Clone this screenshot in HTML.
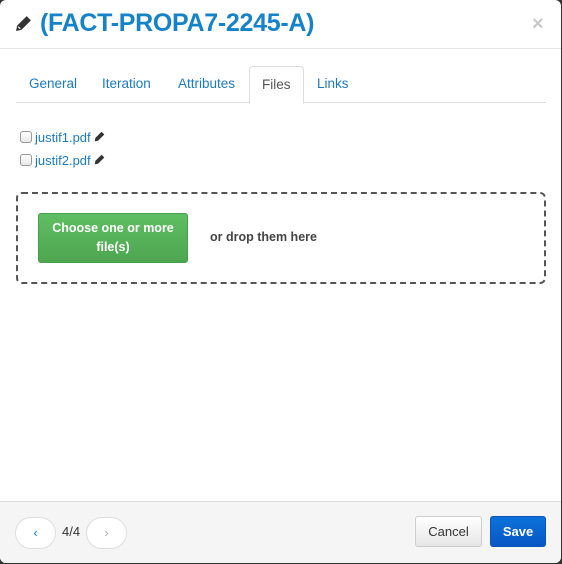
<!DOCTYPE html>
<html><head><style>
*{box-sizing:border-box;margin:0;padding:0}
html,body{width:562px;height:564px;background:#333;overflow:hidden;font-family:"Liberation Sans",Arial,sans-serif}
.m{position:absolute;left:0;top:0;width:561px;height:563px;background:#fff;border-radius:6px;overflow:hidden}
.hd{position:absolute;left:0;top:0;width:100%;height:49px;border-bottom:1px solid #e5e5e5}
.hd .t{position:absolute;left:40px;top:9px;font-size:25px;font-weight:bold;color:#1583c9;letter-spacing:-0.3px}
.hd .x{position:absolute;left:532px;top:13px;font-size:20px;font-weight:bold;color:#c8c8c8}
.tabs{position:absolute;left:16px;top:66px;width:530px;height:37px;border-bottom:1px solid #ddd}
.tab{position:absolute;top:0;height:37px;line-height:36px;font-size:13.5px;color:#1a7bc4}
.tab.a{background:#fff;border:1px solid #ddd;border-bottom-color:#fff;border-radius:4px 4px 0 0;color:#555;height:38px;padding:0 12px;line-height:35px}
.f{position:absolute;left:20px;font-size:13px;color:#1a7bc4}
.cb{display:inline-block;width:12px;height:12px;border:1px solid #999;border-radius:3px;vertical-align:-1px;margin-right:3px;background:linear-gradient(#fff,#e8e8e8)}
.dz{position:absolute;left:16px;top:192px;width:530px;height:92px;border:2px dashed #555;border-radius:6px}
.btn{position:absolute;left:20px;top:19px;width:150px;height:50px;background:linear-gradient(#5fbe62,#4ea650);border:1px solid #46a049;border-radius:3px;color:#fff;font-size:12.5px;font-weight:bold;text-align:center;line-height:19px;padding-top:5px}
.dr{position:absolute;left:192px;top:36px;font-size:12.5px;font-weight:bold;color:#444}
.ft{position:absolute;left:0;top:501px;width:100%;height:62px;background:#f5f5f5;border-top:1px solid #ddd}
.pg{position:absolute;top:15px;width:41px;height:32px;background:#fff;border:1px solid #ddd;border-radius:16px;text-align:center;line-height:29px;font-size:13px}
.cn{position:absolute;left:415px;top:14px;width:67px;height:31px;border:1px solid #ccc;border-radius:3px;background:linear-gradient(#fff,#e6e6e6);font-size:13px;color:#333;text-align:center;line-height:29px}
.sv{position:absolute;left:490px;top:14px;width:56px;height:31px;border:1px solid #0a55b8;border-radius:3px;background:linear-gradient(#0d72db,#0657c4);font-size:13px;font-weight:bold;color:#fff;text-align:center;line-height:29px}
</style></head><body>
<div class="m">
<div class="hd">
<svg style="position:absolute;left:15px;top:15px" width="17" height="17" viewBox="0 0 16 16"><path d="M11 1l4 4-9 9-5 1 1-5z" fill="#333"/><path d="M3 11l2 2" stroke="#fff" stroke-width="1"/></svg>
<div class="t">(FACT-PROPA7-2245-A)</div>
<div class="x">×</div>
</div>
<div class="tabs">
<div class="tab" style="left:13px">General</div>
<div class="tab" style="left:86px">Iteration</div>
<div class="tab" style="left:162px">Attributes</div>
<div class="tab a" style="left:233px">Files</div>
<div class="tab" style="left:301px">Links</div>
</div>
<div class="f" style="top:130px"><span class="cb"></span>justif1.pdf <svg width="11" height="11" viewBox="0 0 16 16"><path d="M11 1l4 4-9 9-5 1 1-5z" fill="#333"/></svg></div>
<div class="f" style="top:153px"><span class="cb"></span>justif2.pdf <svg width="11" height="11" viewBox="0 0 16 16"><path d="M11 1l4 4-9 9-5 1 1-5z" fill="#333"/></svg></div>
<div class="dz"><div class="btn">Choose one or more<br>file(s)</div><div class="dr">or drop them here</div></div>
<div class="ft">
<div class="pg" style="left:15px;color:#1a7bc4">‹</div>
<div style="position:absolute;left:62px;top:22px;font-size:13px;color:#333">4/4</div>
<div class="pg" style="left:86px;color:#aaa">›</div>
<div class="cn">Cancel</div>
<div class="sv">Save</div>
</div>
</div>
</body></html>
